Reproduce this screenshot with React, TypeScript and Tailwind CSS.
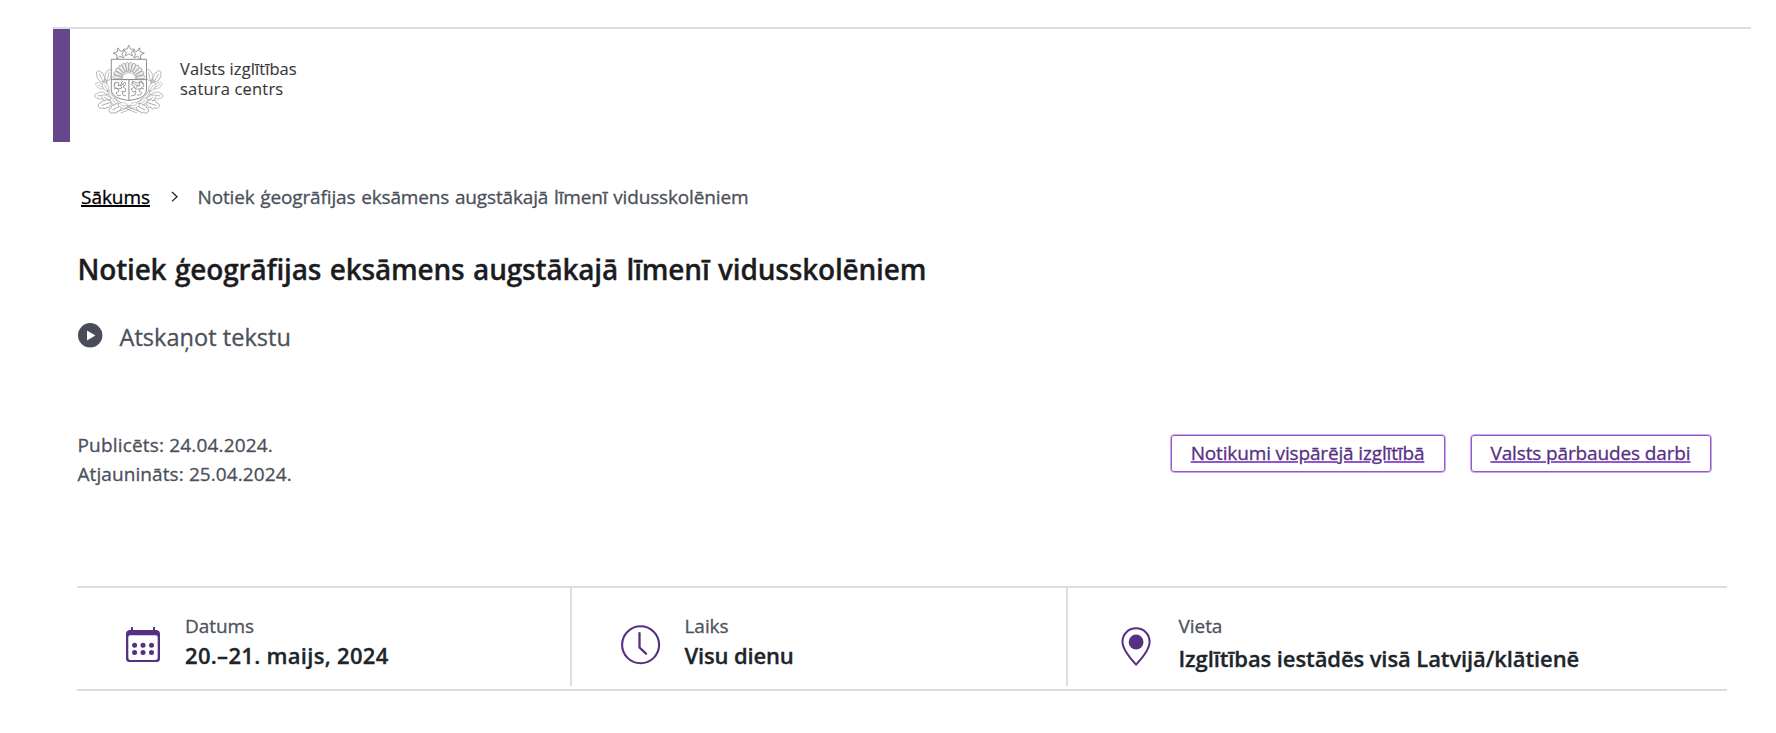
import type { ReactNode } from "react";

const LEAF =
  "M0 0C-1.5-1-2.6-1.6-2.6-3C-3.8-3.6-4-5-3-6C-4.4-7-4-9-2.6-9.4C-3-11.4-1.4-13 0-13C1.4-13 3-11.4 2.6-9.4C4-9 4.4-7 3-6C4-5 3.8-3.6 2.6-3C2.6-1.6 1.5-1 0 0ZM0 2V-10";

const LEAVES: [number, number, number, number][] = [
  [9.5, 37, -28, 0.95],
  [13, 36, 14, 0.9],
  [10.5, 43, -62, 0.75],
  [14, 46, -30, 0.75],
  [13, 50, -95, 0.95],
  [17, 56, -60, 0.8],
  [18, 57, -108, 1.1],
  [24, 60, -50, 0.75],
  [28, 60, -118, 1.1],
  [34, 61, -82, 0.75],
];

const RAYS = [-84, -68, -52, -36, -21, -7, 7, 21, 36, 52, 68, 84];

const STAR =
  "M0-5.9L1.6-2L5.8-1.7L2.5 1L3.6 5.1L0 2.8L-3.6 5.1L-2.5 1L-5.8-1.7L-1.6-2Z";

function Branch() {
  return (
    <g>
      <path d="M11 34C10 47 18 59 43 68M12 34C12 46 20 57 44 66" />
      {LEAVES.map(([x, y, angle, scale]) => (
        <path key={`${x}-${y}`} d={LEAF} fill="#fff" transform={`translate(${x} ${y}) rotate(${angle}) scale(${scale})`} />
      ))}
    </g>
  );
}

function Emblem() {
  return (
    <svg width="70" height="70" viewBox="0 0 70 70" fill="none" stroke="#8c8c8c" strokeWidth="0.6" className="shrink-0">
      <Branch />
      <g transform="translate(69.6 0) scale(-1 1)">
        <Branch />
      </g>
      <g fill="#fff" stroke="#777" strokeWidth="0.7">
        <path d={STAR} transform="translate(25.2 8.6) rotate(-12)" />
        <path d={STAR} transform="translate(44.3 8.6) rotate(12)" />
        <path d={STAR} transform="translate(34.8 6)" />
      </g>
      <path d="M17.3 14.3H52.5V44C52.5 52 45 54 34.9 55.5C24.8 54 17.3 52 17.3 44Z" fill="#fff" stroke="#808080" strokeWidth="0.9" />
      <g stroke="#8f8f8f" fill="#ededed" strokeWidth="0.6">
        {RAYS.map((angle) => (
          <path key={angle} d="M-1-7.5L-1.8-15L0-16.2L1.8-15L1-7.5Z" transform={`translate(34.9 33.5) rotate(${angle})`} />
        ))}
      </g>
      <path d="M28 34.5A6.9 6.9 0 0 1 41.8 34.5Z" fill="#fff" />
      <path d="M17.3 34.6H52.5M34.9 34.6V55" stroke="#808080" strokeWidth="0.9" />
      <g stroke="#8a8a8a" strokeWidth="0.8">
        <path d="M20 40L22 37L25 38L24 41L28 40L31 37L32 39L29 42L32 44L31 47L28 46L29 50L32 51M20 44L23 43L25 46L22 48L24 51L27 50M21 37L20 42L24 44L28 43L26 39M29 36L27 38L31 41" />
        <path d="M50 39L48 37L45 38L46 41L42 40L38 37L38 40L41 42L37 44L39 47L42 46L41 50L37 51M50 44L47 43L45 46L48 48L46 50L43 50M38 36L43 38L47 36L50 41L46 44L41 44L44 40" />
      </g>
    </svg>
  );
}

function PlayIcon() {
  return (
    <svg width="25" height="25" viewBox="0 0 25 25" className="mt-[2px] shrink-0">
      <circle cx="12.2" cy="12.3" r="12.2" fill="#484d57" />
      <path d="M9 7.4V17.4L17.4 12.4Z" fill="#fff" />
    </svg>
  );
}

function CalendarIcon() {
  return (
    <svg width="34" height="36" viewBox="0 0 34 36" fill="#563083">
      <path
        fillRule="evenodd"
        d="M5 .3Q6 -.3 7 .3V3H27V.3Q28 -.3 29 .3V3H30.5Q34 3.5 34 7V31.5Q34 35 30.5 35H3.5Q0 35 0 31.5V7Q0 3.5 3.5 3H5ZM2.3 10V30.8Q2.3 33 4.5 33H29.5Q31.7 33 31.7 30.8V10Q31.7 8.2 29.8 8.2H4.2Q2.3 8.2 2.3 10Z"
      />
      {[8.6, 17, 25.5].map((x) => (
        <g key={x}>
          <circle cx={x} cy="18.2" r="2.5" />
          <circle cx={x} cy="25.4" r="2.5" />
        </g>
      ))}
    </svg>
  );
}

function ClockIcon() {
  return (
    <svg width="40" height="40" viewBox="0 0 40 40" fill="none" stroke="#563083" strokeWidth="2.1" strokeLinecap="round" strokeLinejoin="round">
      <circle cx="19.6" cy="19.8" r="18.5" />
      <path d="M18.5 8.2V22.5L25 28.7" strokeWidth="2.3" />
    </svg>
  );
}

function PinIcon() {
  return (
    <svg width="30" height="40" viewBox="0 0 30 40">
      <path d="M15.1 1.3C7.2 1.3 1.5 7.2 1.5 14.8C1.5 21.5 8.2 30.3 15.1 37.6C22 30.3 28.6 21.5 28.6 14.8C28.6 7.2 22.9 1.3 15.1 1.3Z" fill="none" stroke="#563083" strokeWidth="2" />
      <circle cx="15.1" cy="15" r="7.4" fill="#563083" />
    </svg>
  );
}

function Tag({ children, className }: { children: ReactNode; className: string }) {
  return (
    <a
      href="#"
      className={`flex h-[39px] justify-center rounded-[4px] border border-[#c9a9ec] pt-[4px] text-[19px] leading-7 whitespace-nowrap text-[#563083] underline decoration-[#9257cf] decoration-2 underline-offset-[1px] inset-ring inset-ring-[#9257cf] ${className}`}
    >
      {children}
    </a>
  );
}

function Detail({ label, children }: { label: string; children: ReactNode }) {
  return (
    <div className="pt-6">
      <div className="text-[19px] leading-7 tracking-[-0.05px] text-[#4d525c]">{label}</div>
      {children}
    </div>
  );
}

export default function App() {
  return (
    <div className="h-[733px] overflow-hidden bg-white pt-[27px] font-['Open_Sans',sans-serif] text-[#4b505a] [-webkit-text-stroke:0.3px]">
      <header className="ml-[53px] w-[1698px] border-t-2 border-[#d9dde4]">
        <div className="flex h-[113px] border-l-[17px] border-[#67478b]">
          <div className="flex pt-4 pl-6">
            <Emblem />
            <div className="pt-[14px] pl-4 text-[16.5px] leading-5 text-[#373737] [-webkit-text-stroke:0.1px]">
              <div className="tracking-[0.08px]">Valsts izglītības</div>
              <div className="tracking-[0.18px]">satura centrs</div>
            </div>
          </div>
        </div>
      </header>

      <main className="ml-[77px] w-[1650px]">
        <nav className="flex items-center pt-[41px] pl-1 text-[19px] leading-7">
          <a href="#" className="w-[69px] tracking-[-0.04px] whitespace-nowrap text-black underline decoration-2 underline-offset-[1px]">
            Sākums
          </a>
          <svg width="8" height="12" viewBox="0 0 8 12" fill="none" stroke="#222" strokeWidth="1.3" className="ml-[21px]">
            <path d="M1 1L6 5.7L1 10.4" />
          </svg>
          <span className="ml-[18.5px] tracking-[-0.15px] whitespace-nowrap [word-spacing:1px]">
            Notiek ģeogrāfijas eksāmens augstākajā līmenī vidusskolēniem
          </span>
        </nav>

        <h1 className="mt-10 pl-[0.5px] text-[28px] leading-9 font-semibold tracking-[-0.19px] text-[#1c1c1e] [word-spacing:1.5px]">
          Notiek ģeogrāfijas eksāmens augstākajā līmenī vidusskolēniem
        </h1>

        <div className="mt-[34px] flex h-8 gap-[17px] pl-px">
          <PlayIcon />
          <span className="-ml-[0.5px] text-[23.5px] leading-8 tracking-[0.04px]">Atskaņot tekstu</span>
        </div>

        <div className="mt-[78px] flex h-[57px] justify-between pr-[15.5px]">
          <div className="pl-[0.5px] text-[19px] leading-[29px]">
            <div className="tracking-[0.17px]">Publicēts: 24.04.2024.</div>
            <div className="tracking-[0.09px]">Atjaunināts: 25.04.2024.</div>
          </div>
          <div className="flex gap-6 pt-[3px]">
            <Tag className="w-[276px] tracking-[-0.15px]">Notikumi vispārējā izglītībā</Tag>
            <Tag className="w-[242px] tracking-[-0.13px]">Valsts pārbaudes darbi</Tag>
          </div>
        </div>

        <section className="mt-[98px] flex h-[105px] border-y-2 border-[#d9dde4] text-[22px] leading-[30px] [&_strong]:font-semibold [&_strong]:text-[#20252a]">
          <div className="flex h-[98px] w-[495px] border-r-2 border-[#d9dde4] pl-[49px]">
            <div className="w-[59px] pt-[39px]">
              <CalendarIcon />
            </div>
            <Detail label="Datums">
              <strong className="tracking-[0.3px]">20.–21. maijs, 2024</strong>
            </Detail>
          </div>
          <div className="flex h-[98px] w-[496px] border-r-2 border-[#d9dde4] pl-[49px]">
            <div className="w-[63.5px] pt-[37px]">
              <ClockIcon />
            </div>
            <Detail label="Laiks">
              <strong className="tracking-[-0.15px]">Visu dienu</strong>
            </Detail>
          </div>
          <div className="flex h-[98px] pl-[52.5px]">
            <div className="w-[58px] pt-[39px]">
              <PinIcon />
            </div>
            <Detail label="Vieta">
              <strong className="block pt-[3px] tracking-[-0.1px]">Izglītības iestādēs visā Latvijā/klātienē</strong>
            </Detail>
          </div>
        </section>
      </main>
    </div>
  );
}
